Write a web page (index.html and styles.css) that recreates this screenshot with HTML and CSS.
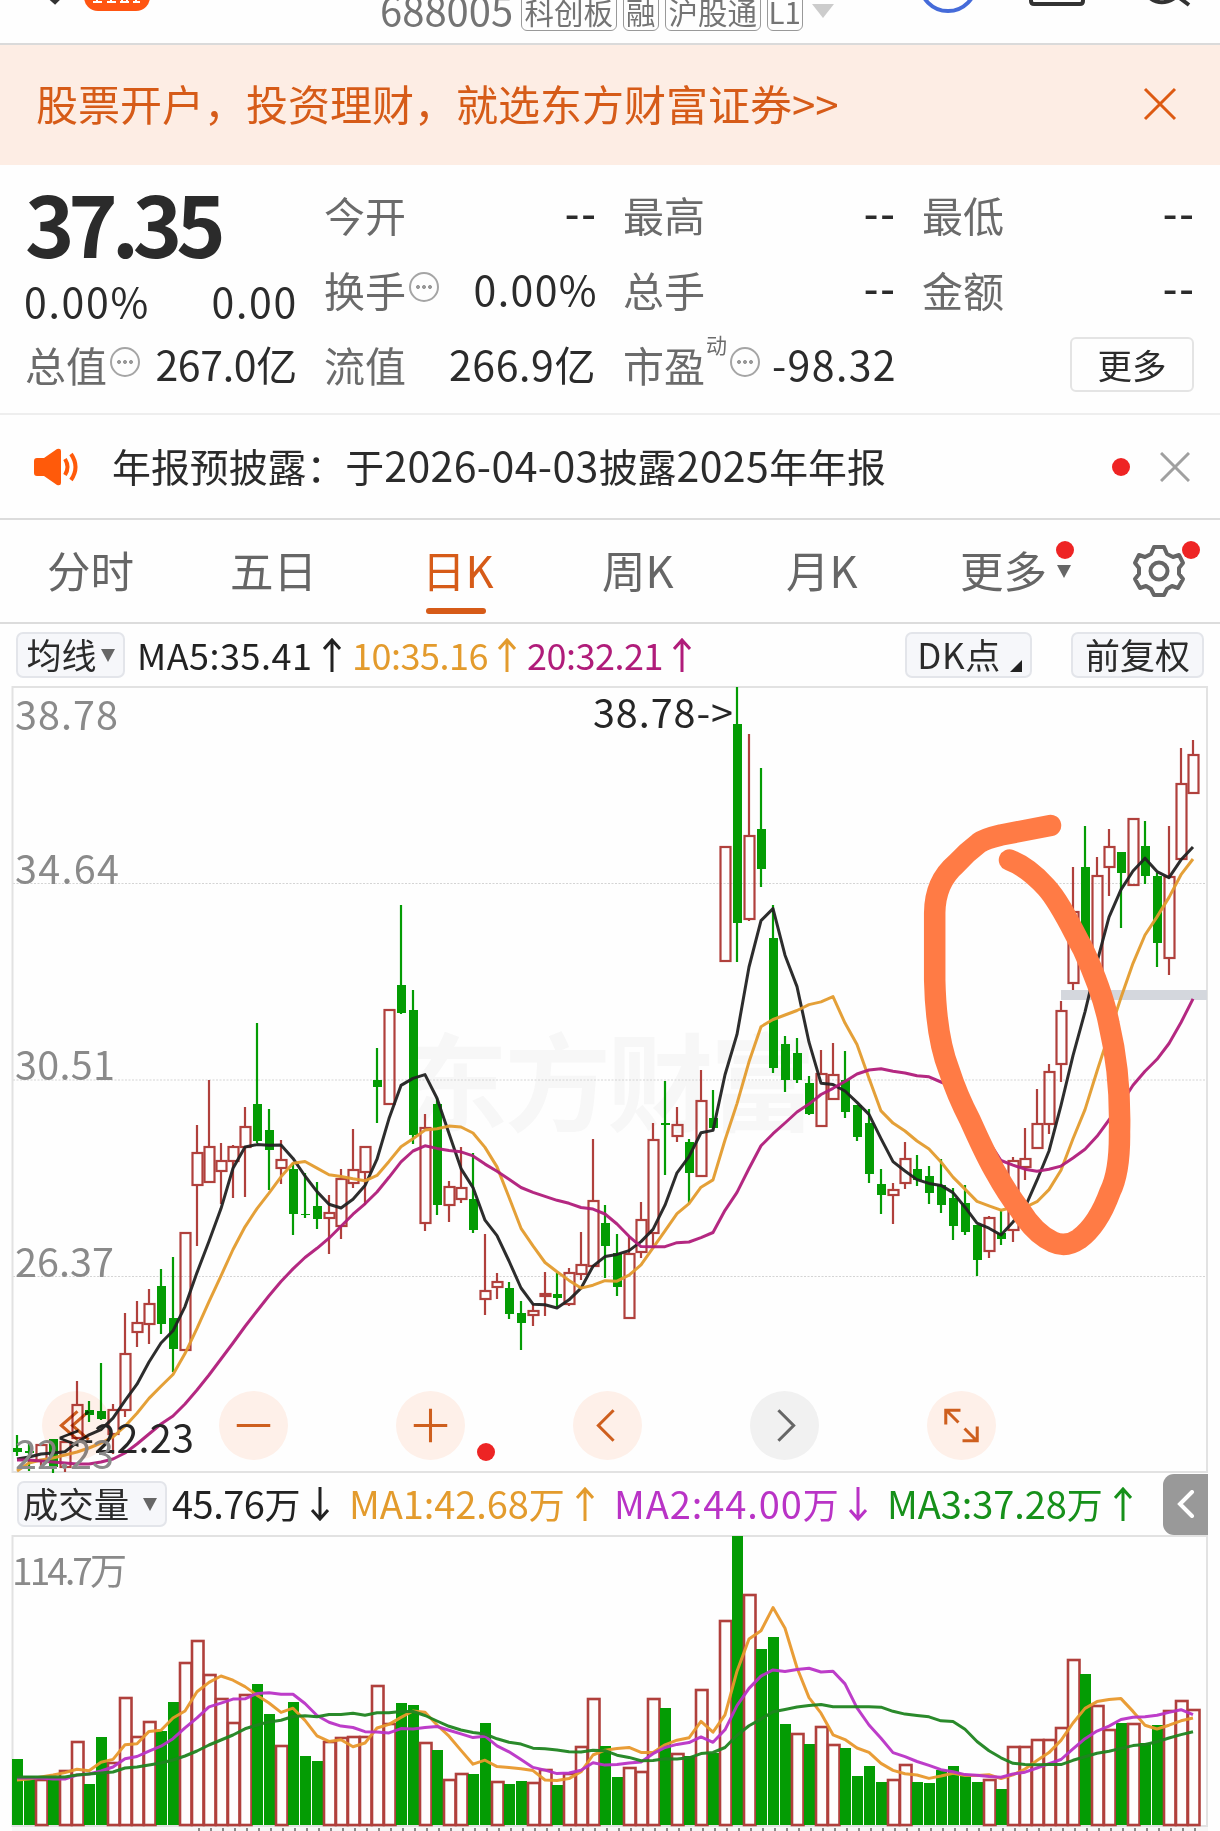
FILE: index.html
```html
<!DOCTYPE html>
<html lang="zh-CN">
<head>
    <meta charset="UTF-8">
    <meta name="viewport" content="width=device-width, initial-scale=1.0">
    <title>688005 日K</title>
    <link rel="stylesheet" href="styles.css">
</head>
<body>
    <div class="topbar">
        <svg class="topbar-left" width="160" height="14" viewBox="0 0 160 14">
            <path d="M46 -6L55 2L60 -3" fill="none" stroke="#333" stroke-width="4"/>
            <rect x="84" y="-30" width="66" height="41" rx="14" fill="#ff5512"/>
            <path d="M93 2h9M97 -2v5M107 2h9M111 -1v3M120 2h9M122 0v2M127 0v2M133 2h7M136 0v2" stroke="#fff" stroke-width="2"/>
        </svg>
        <div class="stock">
            <span class="code">688005</span>
            <span class="tag">科创板</span>
            <span class="tag">融</span>
            <span class="tag">沪股通</span>
            <span class="tag">L1</span>
            <i class="caret"></i>
        </div>
        <svg class="topbar-right" width="280" height="20" viewBox="0 0 280 20">
            <circle cx="28" cy="-17" r="28" fill="none" stroke="#456bd9" stroke-width="4"/>
            <path d="M111 -6V1Q111 4 114 4H160Q163 4 163 1V-6" fill="none" stroke="#333" stroke-width="4"/>
            <path d="M230 -2Q242 7 256 -3M257 -4L269 5" fill="none" stroke="#333" stroke-width="4"/>
        </svg>
    </div>

    <div class="banner">
        <span>股票开户，投资理财，就选东方财富证券&gt;&gt;</span>
        <svg width="34" height="34" viewBox="0 0 34 34"><path d="M2 2L32 32M32 2L2 32" stroke="#dd5a12" stroke-width="3"/></svg>
    </div>

    <!-- 行情 -->
    <div class="quote">
        <div class="price-box">
            <div class="price">37.35</div>
            <div class="pair change"><span>0.00%</span><span>0.00</span></div>
            <div class="pair cap"><label>总值<i class="more-dot"></i></label><span>267.0亿</span></div>
        </div>
        <div class="col">
            <div class="pair"><label>今开</label><b>--</b></div>
            <div class="pair"><label>换手<i class="more-dot"></i></label><span class="wide">0.00%</span></div>
            <div class="pair"><label>流值</label><span>266.9亿</span></div>
        </div>
        <div class="col">
            <div class="pair"><label>最高</label><b>--</b></div>
            <div class="pair"><label>总手</label><b>--</b></div>
            <div class="pair"><label>市盈<sup>动</sup><i class="more-dot"></i></label><span class="wide">-98.32</span></div>
        </div>
        <div class="col">
            <div class="pair"><label>最低</label><b>--</b></div>
            <div class="pair"><label>金额</label><b>--</b></div>
            <div class="pair end"><button class="more-btn">更多</button></div>
        </div>
    </div>

    <div class="notice">
        <svg class="horn" width="46" height="38" viewBox="0 0 46 38">
            <path d="M3 10H10L23 1Q27 0 27 3V35Q27 38 23 37L10 28H3Q0 28 0 25V13Q0 10 3 10Z" fill="#ff5a0a"/>
            <path d="M31 11Q36 19 31 27M37 6Q46 19 37 32" fill="none" stroke="#ff5a0a" stroke-width="4"/>
        </svg>
        <p>年报预披露：于<em>2026-04-03</em>披露<em>2025</em>年年报</p>
        <i class="red-dot"></i>
        <svg width="30" height="30" viewBox="0 0 30 30"><path d="M1 1L29 29M29 1L1 29" stroke="#a0a0a0" stroke-width="3"/></svg>
    </div>

    <div class="tabs">
        <span class="tab">分时</span>
        <span class="tab">五日</span>
        <span class="tab active">日K</span>
        <span class="tab">周K</span>
        <span class="tab">月K</span>
        <span class="tab has-menu">更多<i class="red-dot"></i><i class="caret"></i></span>
        <span class="gear">
            <svg width="54" height="54" viewBox="-27 -27 54 54" fill="none" stroke="#666" stroke-width="4" stroke-linejoin="round">
                <path d="M-5 -24H5L8 -17L14 -14L20 -16L24 -8L20 -3V3L24 8L19 17L13 15L8 18L5 24H-5L-8 18L-13 15L-19 17L-24 8L-20 3V-3L-24 -8L-20 -16L-14 -14L-8 -17Z"/>
                <circle r="8.5"/>
            </svg>
            <i class="red-dot"></i>
        </span>
    </div>

    <div class="ma-bar">
        <span class="pill pill-ma"><span>均线</span><i class="caret"></i></span>
        <span class="ind ma5"><span>MA5:35.41</span><svg class="arrow"><use href="#up"/></svg></span>
        <span class="ind ma10"><span>10:35.16</span><svg class="arrow"><use href="#up"/></svg></span>
        <span class="ind ma20"><span>20:32.21</span><svg class="arrow"><use href="#up"/></svg></span>
        <span class="pill pill-dk"><span>DK点</span><i class="corner"></i></span>
        <span class="pill pill-fq"><span>前复权</span></span>
    </div>

    <!-- K线图 -->
    <div class="chart">
        <svg id="kline" width="1220" height="787" viewBox="0 686 1220 787">
            <text class="watermark" x="402" y="1123" textLength="414">东方财富</text>
            <g class="grid">
                <path d="M13 883.5H1207M13 1080H1207M13 1276.5H1207"/>
            </g>
            <path class="frame" d="M12.5 687H1207V1472H12.5Z"/>
            <g id="candles"></g>
            <rect x="1061" y="990" width="146" height="10" fill="#d4d7dd"/>
            <g id="maLines"></g>
            <text class="mark" x="593" y="728" textLength="140">38.78-&gt;</text>
            <text class="mark" x="58" y="1453" textLength="136">&lt;-22.23</text>
            <g class="axis">
                <text x="15" y="730" textLength="103">38.78</text>
                <text x="15" y="884" textLength="104">34.64</text>
                <text x="15" y="1080" textLength="100">30.51</text>
                <text x="15" y="1277" textLength="99">26.37</text>
                <text x="15" y="1469" textLength="99">22.23</text>
            </g>
            <path class="brush" d="M1050.5 825.5L1001 835Q984 839 979 843Q967 852 956 864Q935 882 934.7 913V980Q936 1037 949 1070Q957 1095 970 1120C980 1142 986 1156 996 1173Q1007 1193 1020 1210C1030 1226 1042 1237 1053 1242Q1066 1248 1079 1239Q1098 1225 1110 1192Q1120 1172 1119.5 1132Q1121 1075 1109 1024C1104 998 1094 973 1083 949C1072 929 1060 902 1046 887Q1028 867 1009.5 860"/>
        </svg>
        <div class="tools">
            <button><svg viewBox="-34 -34 68 68"><path d="M1 -14L-15 0L1 14M12 -14L-4 0L12 14"/></svg></button>
            <button><svg viewBox="-34 -34 68 68"><path d="M-16.5 0H16.5"/></svg></button>
            <button><svg viewBox="-34 -34 68 68"><path d="M-16.5 0H16.5M0 -16.5V16.5"/></svg></button>
            <button><svg viewBox="-34 -34 68 68"><path d="M6 -15L-9 0L6 15"/></svg></button>
            <button class="off"><svg viewBox="-34 -34 68 68"><path d="M-6 -15L9 0L-6 15"/></svg></button>
            <button><svg viewBox="-34 -34 68 68"><path d="M-3 -3L-15 -15M-15.5 -1V-15H-1M3 3L15 15M15.5 1V15H1"/></svg></button>
            <i class="red-dot"></i>
        </div>
    </div>

    <div class="vol-bar">
        <span class="pill pill-vol"><span>成交量</span><i class="caret"></i></span>
        <span class="ind v0"><span>45.76<small>万</small></span><svg class="arrow"><use href="#down"/></svg></span>
        <span class="ind v1"><span>MA1:42.68<small>万</small></span><svg class="arrow"><use href="#up"/></svg></span>
        <span class="ind v2"><span>MA2:44.00<small>万</small></span><svg class="arrow"><use href="#down"/></svg></span>
        <span class="ind v3"><span>MA3:37.28<small>万</small></span><svg class="arrow"><use href="#up"/></svg></span>
        <span class="fold"><svg width="18" height="28" viewBox="0 0 18 28"><path d="M15 2L3 14L15 26" fill="none" stroke="#fff" stroke-width="4" stroke-linecap="round"/></svg></span>
    </div>

    <!-- 成交量图 -->
    <svg class="volume" width="1220" height="296" viewBox="0 1535 1220 296">
        <rect x="12" y="1826" width="1196" height="5" fill="#f7f7f7"/>
        <path class="frame" d="M12.5 1536H1207V1826H12.5Z"/>
        <g class="axis"><text x="12" y="1585" textLength="115">114.7万</text></g>
        <g id="bars"></g>
        <g id="volLines"></g>
        <path d="M198 1829.5H1196" stroke="#888" stroke-width="3" stroke-dasharray="2 10"/>
    </svg>

    <svg class="defs">
        <symbol id="up" viewBox="0 0 18 34"><path d="M9 34V2M1 11L9 2L17 11" fill="none" stroke="currentColor" stroke-width="3"/></symbol>
        <symbol id="down" viewBox="0 0 18 34"><path d="M9 0V32M1 23L9 32L17 23" fill="none" stroke="currentColor" stroke-width="3"/></symbol>
    </svg>

    <script src="chart.js"></script>
</body>
</html>
```
FILE: styles.css
```css
* {
    box-sizing: border-box;
}
body {
    margin: 0;
    width: 1220px;
    height: 1831px;
    overflow: hidden;
    background: #fefefe;
    color: #2b2b2b;
    font-family: "Noto Sans CJK SC", sans-serif;
    line-height: 1;
}
i, em {
    font-style: normal;
}
button {
    font-family: inherit;
    padding: 0;
}
.caret {
    display: inline-block;
    border: 7.5px solid transparent;
    border-top: 13px solid #666;
    border-bottom: 0;
}
.red-dot {
    width: 18px;
    height: 18px;
    border-radius: 50%;
    background: #ee2424;
}
.defs {
    display: none;
}

/* 顶部 */
.topbar {
    height: 45px;
    border-bottom: 2px solid #dadada;
    display: flex;
    align-items: flex-start;
    overflow: hidden;
}
.topbar-left {
    flex: none;
    margin-right: 220px;
}
.stock {
    width: 540px;
    height: 31px;
    display: flex;
    align-items: flex-end;
    gap: 6px;
    color: #747474;
}
.code {
    font-size: 40px;
    line-height: 43px;
    width: 135px;
}
.tag {
    border: 1.5px solid #999;
    border-radius: 6px;
    font-size: 29.5px;
    height: 44px;
    line-height: 46px;
    padding: 0 2.5px;
}
.tag:last-of-type {
    padding: 0 1px;
}
.stock .caret {
    border-width: 14px 11px 0;
    border-top-color: #ccc;
    margin: 0 0 13px 3px;
}

.banner {
    height: 120px;
    background: #fdede4;
    color: #d65b18;
    font-size: 42px;
    display: flex;
    align-items: center;
    justify-content: space-between;
    padding: 0 43px 0 36px;
}
.banner span {
    margin-top: -4px;
}
.banner svg {
    margin-top: -2px;
}

/* 行情 */
.quote {
    height: 250px;
    border-bottom: 2px solid #eee;
    display: flex;
    padding: 12px 24px 0 25px;
    font-size: 41px;
}
.price-box {
    width: 272px;
    margin-right: 27px;
}
.price {
    font-size: 84px;
    font-weight: bold;
    letter-spacing: -6.2px;
    height: 100px;
    line-height: 90px;
}
.pair {
    display: flex;
    justify-content: space-between;
    align-items: center;
    height: 75px;
    white-space: nowrap;
}
.pair b {
    font-weight: 500;
    letter-spacing: 2px;
    margin: -6px -2px 0 0;
}
.change {
    height: 50px;
    line-height: 46px;
    letter-spacing: 1.7px;
}
.change span {
    margin: -4px -1px 0 -1px;
}
label {
    color: #6b6b6b;
    font-size: 41px;
    display: flex;
    align-items: center;
    margin-top: -1px;
}
.more-dot {
    width: 30px;
    height: 30px;
    border: 2px solid #a5a5a5;
    border-radius: 50%;
    margin: -4px 0 0 3px;
    background:
        radial-gradient(circle at 7px 13px, #999 1.8px, transparent 2.2px),
        radial-gradient(circle at 13px 13px, #999 1.8px, transparent 2.2px),
        radial-gradient(circle at 19px 13px, #999 1.8px, transparent 2.2px);
}
.col {
    width: 272px;
    margin-right: 27px;
}
.col:last-child {
    margin-right: 0;
}
.cap span {
    letter-spacing: -0.3px;
    margin-top: -2px;
}
.col span {
    letter-spacing: 0.6px;
    margin-top: -2px;
}
.col .wide {
    letter-spacing: 1.4px;
    margin-right: -2px;
}
sup {
    font-size: 21px;
    margin: -40px 0 0 1px;
    line-height: 1;
}
.end {
    justify-content: flex-end;
}
.more-btn {
    width: 124px;
    height: 55px;
    border: 2px solid #e4e4e4;
    border-radius: 6px;
    background: #fefefe;
    color: #2b2b2b;
    font-size: 34.5px;
    padding-bottom: 5px;
}

/* 公告 */
.notice {
    height: 105px;
    border-bottom: 2px solid #dcdcdc;
    display: flex;
    align-items: center;
    padding: 0 30px 0 34px;
}
.notice p {
    margin: -4px auto 0 32px;
    font-size: 38.9px;
}
.notice em {
    font-size: 41px;
    letter-spacing: 0.4px;
}
.notice .red-dot {
    margin-right: 30px;
}

/* 周期 */
.tabs {
    height: 104px;
    border-bottom: 2px solid #dcdcdc;
    display: flex;
    align-items: center;
    padding-left: 47px;
    font-size: 43.5px;
    color: #666;
}
.tab {
    position: relative;
    width: 183px;
    margin-top: -3px;
    flex: none;
}
.tab:nth-child(2) {
    width: 192px;
}
.tab:nth-child(3) {
    width: 180px;
}
.tab:nth-child(4) {
    width: 184px;
}
.tab:nth-child(5) {
    width: 174px;
}
.tab.has-menu {
    width: 172px;
}
.tab.active {
    color: #d65b18;
}
.tab.active::after {
    content: "";
    position: absolute;
    left: 4px;
    top: 60px;
    width: 60px;
    height: 6px;
    border-radius: 3px;
    background: #d65b18;
}
.has-menu .red-dot {
    position: absolute;
    left: 96px;
    top: -7px;
}
.has-menu .caret {
    position: absolute;
    left: 97px;
    top: 17px;
}
.gear {
    position: relative;
    height: 54px;
}
.gear .red-dot {
    position: absolute;
    left: 50px;
    top: -3px;
}

/* 指标行 */
.ma-bar, .vol-bar {
    display: flex;
    align-items: center;
    white-space: nowrap;
}
.ma-bar {
    height: 62px;
    padding-left: 16px;
    font-size: 36px;
}
.pill {
    height: 46px;
    border: 2px solid #e3e5ea;
    border-radius: 7px;
    background: #f6f7fa;
    font-size: 35px;
    display: flex;
    align-items: center;
    justify-content: center;
    flex: none;
}
.pill span, .ind span {
    margin-top: -3px;
}
.pill-ma {
    width: 109px;
    gap: 4px;
    margin-right: 12px;
}
.pill-dk {
    width: 127px;
    margin: 0 39px 0 auto;
    gap: 9px;
    padding-left: 2px;
}
.pill-dk span {
    letter-spacing: 0.6px;
}
.pill-fq {
    width: 133px;
    margin-right: 16px;
}
.corner {
    border-left: 12px solid transparent;
    border-bottom: 12px solid #222;
    margin-top: 22px;
}
.ind {
    display: flex;
    align-items: center;
    flex: none;
}
.arrow {
    width: 18px;
    height: 34px;
    margin-left: auto;
}
.ma5 {
    width: 204px;
    margin-right: 11px;
    letter-spacing: 0.5px;
    color: #222;
}
.ma10, .ma20 {
    width: 164px;
    margin-right: 11px;
    letter-spacing: -0.5px;
    color: #e39b2d;
}
.ma20 {
    color: #b01c7a;
}

/* 图表 */
.chart {
    position: relative;
    height: 787px;
}
.chart > svg, .volume {
    display: block;
}
.frame {
    fill: none;
    stroke: #e2e2e2;
    stroke-width: 2;
}
.grid path {
    stroke: #d4d4d4;
    stroke-width: 1;
    stroke-dasharray: 2 1.5;
}
.axis {
    font-size: 39.5px;
    fill: #8a8a8a;
}
.volume .axis {
    font-size: 37px;
}
.mark {
    font-size: 39.5px;
    fill: #262626;
}
.watermark {
    font-size: 106px;
    font-weight: bold;
    fill: #f7f7f7;
}
.brush {
    fill: none;
    stroke: #ff7b45;
    stroke-width: 21.5;
    stroke-linecap: round;
    stroke-linejoin: round;
}
.tools {
    position: absolute;
    left: 42px;
    top: 705px;
    display: flex;
    gap: 108px;
    mix-blend-mode: multiply;
}
.tools button {
    width: 69px;
    height: 69px;
    border: 0;
    border-radius: 50%;
    background: #fff1ea;
}
.tools button.off {
    background: #f2f2f2;
}
.tools button svg {
    display: block;
    fill: none;
    stroke: #cf5f1e;
    stroke-width: 3;
}
.tools .off svg {
    stroke: #666;
}
.tools .red-dot {
    position: absolute;
    left: 435px;
    top: 52px;
}
.vol-bar {
    height: 62px;
    padding-left: 17px;
    font-size: 38px;
}
.vol-bar small {
    font-size: 36px;
}
.pill-vol {
    width: 150px;
    gap: 14px;
    margin-right: 5px;
}
.pill-vol span {
    font-size: 35.5px;
    margin-left: -4px;
}
.v0 {
    width: 157px;
    margin-right: 20px;
    letter-spacing: -0.5px;
    color: #222;
}
.v1 {
    width: 245px;
    margin-right: 20px;
    letter-spacing: -0.1px;
    color: #e39b2d;
}
.v2 {
    width: 253px;
    margin-right: 20px;
    letter-spacing: 0.9px;
    color: #b933c6;
}
.v3 {
    width: 245px;
    letter-spacing: -0.1px;
    color: #16901a;
}
.fold {
    width: 45px;
    height: 61px;
    margin: 0 12px 0 auto;
    border-radius: 11px 0 0 11px;
    background: #999;
    display: flex;
    align-items: center;
    justify-content: center;
}
```
FILE: chart.js
```js
// 每根K线: [颜色, 最高, 实体上沿, 实体下沿, 最低]
const candles = [
    ['g',1435,1448,1452,1456],['g',1443,1451,1453,1471],['r',1445,1445,1460,1469],['g',1439,1439,1467,1473],
    ['r',1442,1442,1467,1472],['r',1381,1405,1438,1438],['g',1401,1410,1415,1422],['g',1363,1411,1419,1420],
    ['r',1404,1410,1434,1454],['r',1313,1354,1410,1417],['r',1301,1323,1332,1347],['r',1289,1304,1324,1344],
    ['g',1269,1286,1324,1334],['g',1257,1318,1349,1372],['r',1233,1233,1350,1350],['r',1125,1153,1185,1246],
    ['r',1080,1147,1182,1182],['r',1143,1161,1171,1204],['r',1145,1147,1161,1198],['r',1107,1127,1147,1197],
    ['g',1023,1104,1141,1143],['g',1109,1130,1150,1190],['r',1140,1160,1168,1184],['g',1163,1169,1214,1235],
    ['g',1173,1214,1215,1218],['g',1182,1206,1219,1229],['r',1195,1213,1218,1254],['r',1169,1179,1226,1239],
    ['r',1129,1170,1183,1188],['r',1147,1147,1172,1205],['g',1048,1080,1087,1123],['r',1010,1010,1104,1104],
    ['g',905,985,1013,1014],['g',990,1010,1135,1144],['r',1114,1128,1223,1231],['g',1098,1104,1205,1215],
    ['r',1181,1187,1205,1222],['r',1147,1188,1199,1203],['g',1153,1199,1230,1233],['r',1234,1291,1299,1315],
    ['r',1273,1282,1287,1299],['g',1282,1288,1314,1319],['g',1301,1313,1323,1350],['r',1304,1311,1315,1326],
    ['r',1272,1294,1296,1316],['g',1273,1294,1298,1307],['r',1268,1273,1304,1306],['r',1232,1265,1274,1280],
    ['r',1139,1201,1266,1266],['g',1205,1223,1246,1278],['g',1234,1253,1287,1296],['r',1237,1254,1318,1318],
    ['r',1202,1220,1252,1258],['r',1123,1140,1233,1247],['g',1081,1123,1125,1175],['r',1107,1125,1136,1142],
    ['g',1139,1142,1173,1203],['r',1070,1101,1176,1176],['g',1090,1118,1128,1130],['r',847,847,961,962],
    ['g',687,724,923,962],['r',734,836,919,921],['g',768,829,869,887],['g',905,938,1068,1073],
    ['g',1036,1044,1080,1092],['g',1038,1053,1080,1083],['g',1076,1083,1114,1115],['r',1050,1074,1126,1126],
    ['r',1043,1075,1099,1099],['g',1051,1080,1112,1118],['g',1105,1105,1137,1141],['g',1109,1123,1174,1183],
    ['g',1169,1184,1195,1214],['r',1183,1190,1195,1224],['r',1142,1159,1183,1189],['g',1155,1169,1180,1186],
    ['g',1166,1176,1193,1204],['g',1159,1185,1205,1213],['g',1188,1198,1226,1240],['g',1185,1203,1232,1235],
    ['g',1225,1225,1260,1276],['r',1216,1218,1251,1258],['g',1210,1233,1239,1245],['r',1157,1161,1230,1242],
    ['r',1128,1159,1167,1180],['r',1089,1124,1148,1148],['r',1064,1072,1124,1134],['r',1001,1011,1064,1082],
    ['r',867,912,983,990],['g',826,867,940,941],['r',857,876,970,970],['r',829,847,867,896],
    ['g',852,852,873,928],['r',819,819,885,885],['g',821,846,876,884],['g',873,876,943,967],
    ['r',826,877,958,975],['r',748,784,859,859],['r',740,755,793,793]
];

// 成交量柱顶, 顺序与K线一致
const volumeTops = [
    1759,1776,1780,1777,1771,1742,1784,1737,1763,1698,1737,1722,1731,1702,1663,1641,1675,1699,1723,1695,
    1684,1714,1746,1702,1756,1761,1742,1738,1737,1737,1686,1724,1703,1705,1743,1750,1780,1774,1774,1723,
    1782,1784,1781,1783,1770,1785,1774,1747,1699,1746,1777,1768,1772,1699,1708,1754,1756,1690,1753,1621,
    1536,1595,1649,1637,1724,1734,1744,1727,1745,1748,1776,1766,1782,1780,1765,1782,1783,1770,1766,1776,
    1782,1780,1789,1747,1747,1740,1740,1728,1660,1674,1706,1730,1723,1724,1743,1725,1711,1701,1710
];
// 收跌但量柱为红的位置, 以及收涨但量柱为绿的位置
const volumeRed = [30, 65];
const volumeGreen = [39];

const RED = '#b0403c';
const GREEN = '#049c04';
const x = i => 17 + 12 * i;

let html = '';
candles.forEach(([c, high, top, bottom, low], i) => {
    const color = c === 'r' ? RED : GREEN;
    if (c === 'r') {
        html += `<path d="M${x(i)} ${high}V${top}M${x(i)} ${bottom}V${low}" stroke="${color}" stroke-width="2.2"/>`;
        html += `<rect x="${x(i) - 4.5}" y="${top}" width="10" height="${bottom - top}" fill="none" stroke="${color}" stroke-width="2.2"/>`;
    } else {
        html += `<path d="M${x(i)} ${high}V${low}" stroke="${color}" stroke-width="2.2"/>`;
        html += `<rect x="${x(i) - 4}" y="${top}" width="9" height="${bottom - top}" fill="${color}"/>`;
    }
});
document.getElementById('candles').innerHTML = html;

html = '';
volumeTops.forEach((top, i) => {
    const red = volumeRed.includes(i) || (candles[i][0] === 'r' && !volumeGreen.includes(i));
    if (red) {
        html += `<rect x="${x(i) - 5}" y="${top}" width="11.5" height="${1825 - top}" fill="#fefefe" stroke="${RED}" stroke-width="2.6"/>`;
    } else {
        html += `<rect x="${x(i) - 5}" y="${top}" width="11" height="${1825 - top}" fill="${GREEN}"/>`;
    }
});
document.getElementById('bars').innerHTML = html;

// 均线: seed 为窗口不足时的起始值
function average(values, n, seed) {
    return values.map((v, i) => {
        if (i < seed.length) return seed[i];
        return values.slice(i - n + 1, i + 1).reduce((a, b) => a + b, 0) / n;
    });
}

function line(values, color) {
    const points = values.map((v, i) => `${x(i)},${v.toFixed(1)}`).join(' ');
    return `<polyline points="${points}" fill="none" stroke="${color}" stroke-width="3" stroke-linejoin="round" stroke-opacity="0.95"/>`;
}

const closes = candles.map(c => c[0] === 'r' ? c[2] : c[3]);
document.getElementById('maLines').innerHTML =
    line(average(closes, 5, [1459,1457,1454,1453]), '#222') +
    line(average(closes, 10, [1471,1463,1460,1458,1455,1452,1448,1443,1437]), '#e39b2d') +
    line(average(closes, 20, [1460,1460,1461,1462,1463,1464,1464,1462,1459,1453,1444,1434,1424,1416,1404,1390,1375,1359,1343]), '#b01c7a');

document.getElementById('volLines').innerHTML =
    line(average(volumeTops, 5, [1780,1779,1777,1775]), '#e8982c') +
    line(average(volumeTops, 10, [1778,1778,1778,1779,1779,1775,1774,1771,1767]), '#b933c6') +
    line(average(volumeTops, 20, [1777,1777,1777,1777,1777,1775,1774,1773,1772,1768,1767,1765,1763,1760,1756,1751,1745,1740,1735]), '#1f8420');
```
